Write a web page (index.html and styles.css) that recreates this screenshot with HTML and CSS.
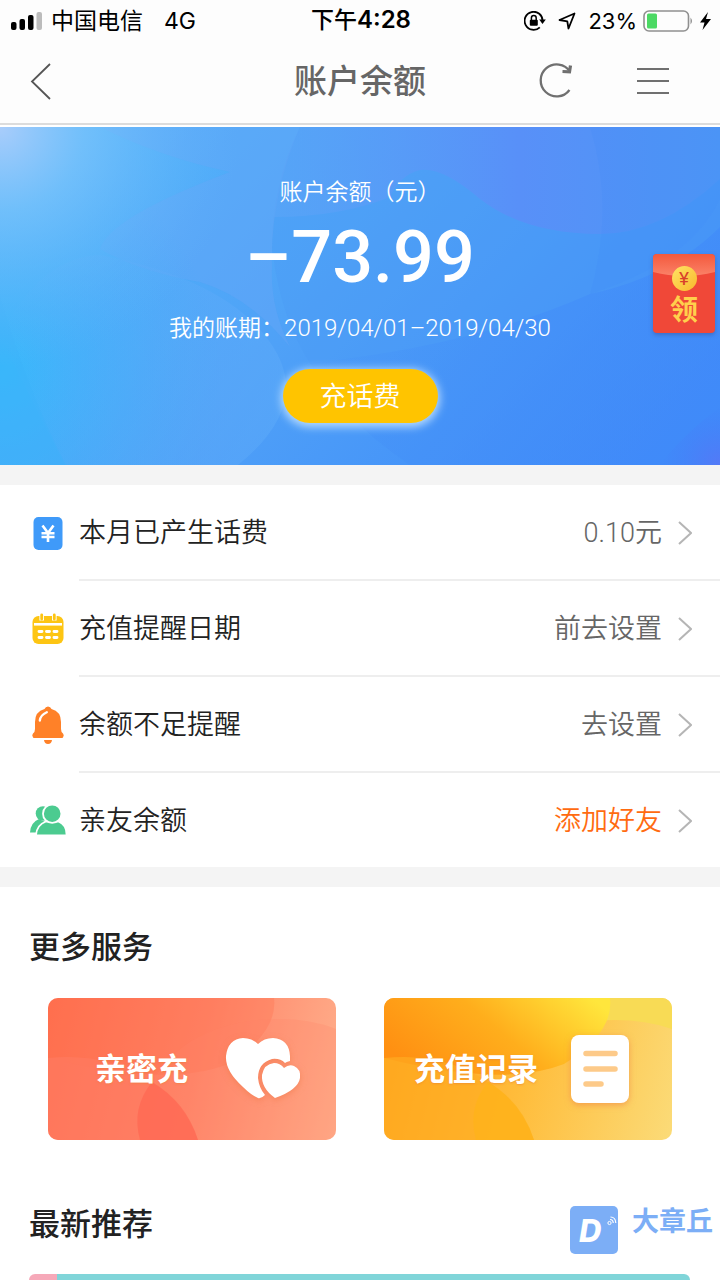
FILE: index.html
```html
<!DOCTYPE html>
<html lang="zh-CN">
<head>
<meta charset="utf-8">
<meta name="viewport" content="width=device-width, initial-scale=1">
<title>账户余额</title>
<link rel="stylesheet" href="styles.css">
</head>
<body>
<header class="top">
  <div class="status">
    <div class="status-left">
      <svg width="32" height="20" viewBox="0 0 32 20" aria-hidden="true"><rect x="0" y="11" width="5.500" height="8" rx="2"/><rect x="8.500" y="8" width="5.500" height="11" rx="2"/><rect x="17" y="4" width="5.500" height="15" rx="2"/><rect x="25.500" y="1" width="5.500" height="18" rx="2" fill="#bcbcbc"/></svg>
      <span class="carrier">中国电信</span>
      <span>4G</span>
    </div>
    <div class="clock">下午<span class="clock-time">4:28</span></div>
    <div class="status-right">
      <svg width="22" height="20" viewBox="0 0 22 20" aria-hidden="true"><path d="M18.600 10A9 9 0 1 0 15.800 16.300" fill="none" stroke="#000" stroke-width="1.800"/><path d="M15.200 8.500h6.600L18.500 13z"/><rect x="5.800" y="8.800" width="8" height="6" rx="1"/><path d="M7.400 9V7a2.400 2.400 0 0 1 4.800 0v2" fill="none" stroke="#000" stroke-width="1.500"/></svg>
      <svg class="gps" width="18" height="18" viewBox="0 0 18 18" aria-hidden="true"><path d="M1.500 8 16.500 1.500 10.500 16.500 9.300 9.300z" fill="none" stroke="#000" stroke-width="1.800" stroke-linejoin="round"/></svg>
      <span class="percent">23%</span>
      <svg width="51" height="22" viewBox="0 0 51 22" aria-hidden="true"><rect x="1" y="1" width="44.500" height="20" rx="5" fill="none" stroke="#909090" stroke-width="1.600"/><rect x="4" y="3.500" width="10" height="15" rx="1.500" fill="#4cd964"/><path d="M47.500 7.500q3 3.500 0 7z" fill="#909090"/></svg>
      <svg width="11" height="18" viewBox="0 0 11 18" aria-hidden="true"><path d="M8 0 0 10.500h4.500L2.500 18 11 7H6z"/></svg>
    </div>
  </div>
  <nav class="nav">
    <button class="icon-btn" type="button" aria-label="返回"><svg width="22" height="38" viewBox="0 0 22 38"><path d="M20 2 2 19.500 20 37" fill="none" stroke="#555" stroke-width="1.800"/></svg></button>
    <h1 class="nav-title">账户余额</h1>
    <div class="nav-actions">
      <button class="icon-btn" type="button" aria-label="刷新"><svg width="36" height="38" viewBox="0 0 36 38"><path d="M32 9.500A16 16 0 1 0 31.500 28" fill="none" stroke="#707070" stroke-width="2.300"/><path d="M24.500 9.500 31.500 9.800 32.500 3.500" fill="none" stroke="#707070" stroke-width="3.200"/></svg></button>
      <button class="icon-btn" type="button" aria-label="菜单"><svg width="34" height="28" viewBox="0 0 34 28"><path d="M1 2h32M1 14h32M1 26h32" fill="none" stroke="#707070" stroke-width="2"/></svg></button>
    </div>
  </nav>
</header>
<main>
  <section class="hero">
    <svg class="hero-art" viewBox="0 0 720 338" preserveAspectRatio="none" aria-hidden="true">
      <defs>
        <linearGradient id="base" x1="0" y1=".3" x2="1" y2=".75"><stop offset="0" stop-color="#50b4fa"/><stop offset=".45" stop-color="#4fa1f7"/><stop offset="1" stop-color="#3f8afa"/></linearGradient>
        <radialGradient id="shine" gradientUnits="userSpaceOnUse" cx="0" cy="0" r="240"><stop offset="0" stop-color="#a9cdfb"/><stop offset=".35" stop-color="#7cc3fb" stop-opacity=".75"/><stop offset="1" stop-color="#61b2fa" stop-opacity="0"/></radialGradient>
        <radialGradient id="cyan" gradientUnits="userSpaceOnUse" cx="0" cy="240" r="220"><stop offset="0" stop-color="#38b9fb"/><stop offset="1" stop-color="#3eaefa" stop-opacity="0"/></radialGradient>
        <linearGradient id="violet" x1="0" y1="0" x2="1" y2="0"><stop offset="0" stop-color="#5ba5f7" stop-opacity=".6"/><stop offset=".55" stop-color="#5890f8"/><stop offset="1" stop-color="#4e96f5"/></linearGradient>
        <linearGradient id="pale" x1="0" y1="0" x2="1" y2="0"><stop offset="0" stop-color="#62adf9" stop-opacity="0"/><stop offset="1" stop-color="#5ba9f9" stop-opacity=".6"/></linearGradient>
        <linearGradient id="deep" gradientUnits="userSpaceOnUse" x1="360" y1="120" x2="640" y2="338"><stop offset="0" stop-color="#3e86fa" stop-opacity="0"/><stop offset="1" stop-color="#3e86fa" stop-opacity=".6"/></linearGradient>
        <radialGradient id="corner" gradientUnits="userSpaceOnUse" cx="720" cy="338" r="60"><stop offset="0" stop-color="#5479f7"/><stop offset="1" stop-color="#427ff9" stop-opacity="0"/></radialGradient>
      </defs>
      <path fill="url(#base)" d="M0 0H720V338H0z"/>
      <path fill="#4b9cf6" opacity=".4" d="M300 0H720V338H410Q340 290 310 236 280 190 272 120 272 60 300 0z"/>
      <path fill="#63a6f7" opacity=".5" d="M100 0H300Q270 70 272 140 270 180 290 220 250 170 200 155 140 145 100 122 110 90 230 45 160 30 100 0z"/>
      <path fill="url(#violet)" d="M300 0H720V52Q660 107 600 107 525 107 480 72 443 40 420 43 400 48 390 70 340 90 274 90 278 45 300 0z"/>
      <path fill="#3f8bfa" opacity=".2" d="M590 0Q615 80 590 167 690 135 720 72V0z"/>
      <path fill="url(#deep)" d="M310 236Q470 220 590 167 670 150 720 100V338H410Q340 290 310 236z"/>
      <path fill="url(#cyan)" d="M0 0H300V338H0z"/>
      <path fill="url(#pale)" d="M100 128Q215 150 262 205 320 272 238 338H65Q20 250 0 210 40 130 100 128z"/>
      <path fill="#3cb1fa" opacity=".35" d="M0 170Q30 270 66 338H0z"/>
      <path fill="url(#shine)" d="M0 0H240V240H0z"/>
      <path fill="url(#corner)" d="M660 338Q680 310 720 280V338z"/>
    </svg>
    <div class="hero-content">
      <p class="hero-label">账户余额（元）</p>
      <p class="balance">–73.99</p>
      <p class="period">我的账期：<span class="dates">2019/04/01–2019/04/30</span></p>
      <button class="recharge" type="button">充话费</button>
    </div>
    <a class="envelope" href="#" aria-label="领红包">
      <svg class="envelope-flap" viewBox="0 0 62 22" preserveAspectRatio="none" aria-hidden="true"><defs><linearGradient id="flap" x1="0" y1="0" x2="0" y2="1"><stop offset="0" stop-color="#f3593d"/><stop offset="1" stop-color="#fb8268"/></linearGradient></defs><path d="M0 0H62V18Q31 26 0 18z" fill="url(#flap)"/></svg>
      <span class="coin">¥</span>
      <span class="claim">领</span>
    </a>
  </section>

  <ul class="list">
    <li class="row">
      <svg class="row-icon" width="36" height="36" viewBox="0 0 36 36" aria-hidden="true"><rect x="3.500" y="2" width="29" height="33" rx="5" fill="#3f9af9"/><path d="m12.500 10.500 5.500 7.500 5.500-7.500M18 18v9M11.500 18.200h13M11.500 22h13" fill="none" stroke="#fff" stroke-width="2.600"/></svg>
      <a class="row-body" href="#"><span class="row-name">本月已产生话费</span><span class="row-value">0.10元</span><svg class="chevron" width="14" height="24" viewBox="0 0 14 24" aria-hidden="true"><path d="m1 1 12 11L1 23"/></svg></a>
    </li>
    <li class="row">
      <svg class="row-icon" width="36" height="36" viewBox="0 0 36 36" aria-hidden="true"><rect x="2.500" y="5" width="31" height="28" rx="6" fill="#fdc513"/><path d="M4 13.300h28" stroke="#fff" stroke-width="2.600"/><path d="M11.700 3v6.500M24.300 3v6.500" stroke="#fff" stroke-width="4.600"/><path d="M11.700 4v4M24.300 4v4" stroke="#fdc513" stroke-width="2.800" stroke-linecap="round"/><path d="M9 20.500h3M16.500 20.500h3M24 20.500h3M9 26.500h3M16.500 26.500h3M24 26.500h3" stroke="#fff" stroke-width="2.900" stroke-linecap="round"/></svg>
      <a class="row-body" href="#"><span class="row-name">充值提醒日期</span><span class="row-value">前去设置</span><svg class="chevron" width="14" height="24" viewBox="0 0 14 24" aria-hidden="true"><path d="m1 1 12 11L1 23"/></svg></a>
    </li>
    <li class="row">
      <svg class="row-icon" width="36" height="38" viewBox="0 0 36 38" aria-hidden="true"><path d="M18 .500q2.500 0 3.500 2.500 9.500 2.500 9.500 13v7q0 3 2 4.500 1.500 1.500 0 4-.5.500-2 .500H5q-1.500 0-2-.500-1.500-2.500 0-4 2-1.500 2-4.500v-7Q5 5.500 14.500 3q1-2.500 3.500-2.500z" fill="#ff8128"/><path d="M14 34h8q-.5 4-4 4t-4-4z" fill="#ff8128"/><path d="M9.800 14.500q.7-5.500 7-8.300" fill="none" stroke="#fff" stroke-width="2.300" stroke-linecap="round"/></svg>
      <a class="row-body" href="#"><span class="row-name">余额不足提醒</span><span class="row-value">去设置</span><svg class="chevron" width="14" height="24" viewBox="0 0 14 24" aria-hidden="true"><path d="m1 1 12 11L1 23"/></svg></a>
    </li>
    <li class="row">
      <svg class="row-icon" width="36" height="30" viewBox="0 0 36 30" aria-hidden="true"><circle cx="13" cy="8.500" r="7.300" fill="#4ccb90"/><path d="M0 27.500Q.500 17.500 9 14l6 3-8 10.500z" fill="#4ccb90"/><path d="M6 30.500Q6.500 20 16 16.500h12.500Q37 20 36.500 30.500z" fill="#4ccb90" stroke="#fff" stroke-width="1.800"/><circle cx="22.200" cy="8.700" r="9.200" fill="#4ccb90" stroke="#fff" stroke-width="1.800"/></svg>
      <a class="row-body" href="#"><span class="row-name">亲友余额</span><span class="row-value accent">添加好友</span><svg class="chevron" width="14" height="24" viewBox="0 0 14 24" aria-hidden="true"><path d="m1 1 12 11L1 23"/></svg></a>
    </li>
  </ul>

  <section class="services">
    <h2 class="heading">更多服务</h2>
    <div class="cards">
      <a class="card card-red" href="#">
        <svg class="card-art" viewBox="0 0 288 142" preserveAspectRatio="none" aria-hidden="true"><path d="M0 0H226Q230 35 180 66 120 90 0 60z" fill="#ff7450" opacity=".35"/><path d="M210 22Q255 18 288 31V142H150Q136 105 104 84 135 30 210 22z" fill="#ff8468" opacity=".25"/><path d="M0 60Q60 54 104 84 136 105 150 142H0z" fill="#ff7c62" opacity=".6"/><path d="M104 84Q83 110 92 142H150Q138 104 104 84z" fill="#ff6853" opacity=".75"/></svg>
        <span class="card-text">亲密充</span>
        <svg class="card-icon" width="76" height="62" viewBox="0 0 76 62" aria-hidden="true"><path d="M33 60Q26 57 18 49 0 33 1 18 3 1 18 0q9 0 15 6 6-6 15-6 16 1 17 18v5q-4 1-5 2-5-5-13-4Q33 25 33 40q1 10 7 17-4 4-7 3z" fill="#fff"/><path d="M50 60Q36 50 37 37q2-11 12-12 6 0 10 5 5-4 10-2 7 3 6 12-2 12-25 20z" fill="#fff"/></svg>
      </a>
      <a class="card card-gold" href="#">
        <svg class="card-art" viewBox="0 0 288 142" preserveAspectRatio="none" aria-hidden="true"><defs><linearGradient id="gold" x1="0" y1=".6" x2="1" y2=".2"><stop offset="0" stop-color="#ff9012"/><stop offset=".5" stop-color="#ffae1c"/><stop offset="1" stop-color="#ffe63c"/></linearGradient></defs><path d="M226 0H288V31Q250 18 200 24z" fill="#f8db55"/><path d="M0 0H226Q230 35 180 66 120 90 0 60z" fill="url(#gold)"/><path d="M0 60Q60 54 104 84 136 105 150 142H0z" fill="#ffae22" opacity=".65"/><path d="M104 84Q83 110 92 142H150Q138 104 104 84z" fill="#ffb31c" opacity=".9"/></svg>
        <span class="card-text">充值记录</span>
        <svg class="card-icon" width="58" height="68" viewBox="0 0 58 68" aria-hidden="true"><rect width="58" height="68" rx="8" fill="#fff"/><path d="M15 18.500h29M15 34h29M15 49h15" stroke="#fdca89" stroke-width="5.500" stroke-linecap="round"/></svg>
      </a>
    </div>
  </section>

  <section class="latest">
    <div class="latest-head">
      <h2 class="heading">最新推荐</h2>
      <div class="brand">
        <svg width="48" height="48" viewBox="0 0 48 48" aria-hidden="true"><rect width="48" height="48" rx="5" fill="#7caef6"/><text class="brand-letter" x="9" y="36">D</text><circle cx="39.500" cy="17" r="1.600" fill="none" stroke="#fff"/><path d="M40 13.500q3 0 3.300 3.500M40.500 11q5 0 5.300 6" fill="none" stroke="#fff" stroke-width="1.200"/></svg>
        <span class="brand-name">大章丘</span>
      </div>
    </div>
    <div class="banner"></div>
  </section>
</main>
</body>
</html>
```

FILE: styles.css
```css
* { box-sizing: border-box; }

body {
  margin: 0;
  background: #fff;
  color: #222;
  font-family: Roboto, "Noto Sans CJK SC", sans-serif;
  font-weight: 350;
}

h1, h2, p, ul { margin: 0; padding: 0; }
a { color: inherit; text-decoration: none; }
svg { display: block; flex: none; }
button { font-family: inherit; font-weight: inherit; cursor: pointer; }

.top {
  background: #fdfdfd;
  border-bottom: 2px solid #dcdcdc;
  margin-bottom: 2px;
}

.status {
  display: grid;
  grid-template-columns: 1fr auto 1fr;
  align-items: center;
  height: 40px;
  padding: 0 9px 0 11px;
  color: #000;
  font-size: 23px;
  font-weight: 400;
  line-height: 40px;
}
.status-left, .status-right { display: flex; align-items: center; }
.status-left { font-family: Inter, "Noto Sans CJK SC", sans-serif; }
.carrier { margin: 0 21px 0 8px; }
.clock { font-weight: 500; }
.clock-time { font-family: Inter, sans-serif; font-size: 24px; font-weight: 600; }
.status-right { justify-content: flex-end; }
.gps { margin: 0 12px; }
.percent { margin-right: 6px; font-family: Inter, sans-serif; font-size: 22px; }
.status-right svg:last-child { margin-left: 6px; }

.nav {
  display: grid;
  grid-template-columns: 1fr auto 1fr;
  align-items: center;
  height: 83px;
  padding: 0 30px 2px;
}
.nav-title { padding-top: 2px; color: #666; font-size: 33px; font-weight: 500; line-height: 48px; }
.nav-actions { display: flex; justify-content: flex-end; align-items: center; gap: 62px; padding-right: 20px; }
.icon-btn { border: 0; background: none; padding: 0; }

.hero { position: relative; background: #489ff8; color: #fff; }
.hero-art { position: absolute; inset: 0; width: 100%; height: 100%; }
.hero-content {
  position: relative;
  display: flex;
  flex-direction: column;
  align-items: center;
  padding: 49px 20px 42px;
}
.hero-label { font-size: 23px; line-height: 34px; }
.balance { font-size: 72px; font-weight: 500; line-height: 96px; }
.period { margin-top: 5px; font-size: 23px; line-height: 34px; }
.dates { font-size: 24px; }
.recharge {
  margin-top: 23px;
  padding: 2px 37px 0;
  border: 0;
  border-radius: 27px;
  background: #ffc400;
  box-shadow: 0 2px 8px 2px #b5dafe;
  color: #fff;
  font-size: 27px;
  line-height: 52px;
}
.envelope {
  position: absolute;
  top: 127px;
  right: 5px;
  display: flex;
  flex-direction: column;
  align-items: center;
  gap: 2px;
  width: 62px;
  padding: 12px 0 4px;
  border-radius: 4px;
  background: #f04838;
  box-shadow: 0 2px 4px #36539c88;
  overflow: hidden;
}
.envelope-flap { position: absolute; top: 0; left: 0; width: 100%; height: 22px; }
.coin {
  position: relative;
  width: 25px;
  border-radius: 50%;
  background: linear-gradient(135deg, #ffe365, #f8b92c);
  color: #d8402b;
  font-size: 19px;
  font-weight: 400;
  line-height: 25px;
  text-align: center;
}
.claim { color: #ffd04c; font-size: 28px; font-weight: 700; line-height: 36px; }

.list {
  border: solid #f4f4f4;
  border-width: 20px 0;
  list-style: none;
  font-size: 27px;
}
.row { display: flex; align-items: center; gap: 13px; padding-left: 30px; }
.row-body {
  flex: 1;
  display: flex;
  align-items: center;
  padding: 2px 28px 0 0;
  border-bottom: 2px solid #eee;
  line-height: 92px;
}
.row:last-child .row-body { border-bottom: 0; }
.row-value { margin-left: auto; color: #666; }
.row-value.accent { color: #ff6b10; }
.chevron { margin-left: 16px; fill: none; stroke: #b5b5b5; stroke-width: 2; }

.heading { font-size: 31px; font-weight: 500; line-height: 46px; }
.services { padding: 38px 48px 0; }
.services .heading { margin-left: -19px; }
.cards { display: grid; grid-template-columns: 1fr 1fr; gap: 48px; margin-top: 27px; }
.card {
  position: relative;
  display: flex;
  align-items: center;
  justify-content: space-between;
  height: 142px;
  border-radius: 10px;
  overflow: hidden;
  color: #fff;
  font-size: 31px;
  font-weight: 700;
  line-height: 46px;
}
.card-red { padding: 0 35px 0 47px; background: linear-gradient(105deg, #ff6d4d, #ff8468 50%, #ffb18d); }
.card-gold { padding: 0 43px 0 30px; background: linear-gradient(105deg, #ff9c18, #ffbd3c 50%, #fbdb78); }
.card-art { position: absolute; inset: 0; width: 100%; height: 100%; }
.card-text { position: relative; padding-top: 2px; text-shadow: 0 1px 2px #e9803588; }
.card-icon { position: relative; filter: drop-shadow(0 2px 3px #ed784688); }

.latest { padding: 62px 30px 0 29px; }
.latest-head { display: flex; justify-content: space-between; align-items: flex-start; margin-right: -23px; }
.brand { display: flex; gap: 14px; padding-top: 4px; color: #7caef6; }
.brand-name { font-size: 27px; font-weight: 700; line-height: 32px; }
.brand-letter { fill: #fff; font-family: Inter, sans-serif; font-size: 31px; font-style: italic; font-weight: 800; }
.banner {
  height: 6px;
  margin-top: 20px;
  border-radius: 10px 10px 0 0;
  background: linear-gradient(90deg, #f6a9b9 28px, #80d5d9 28px);
}
```
